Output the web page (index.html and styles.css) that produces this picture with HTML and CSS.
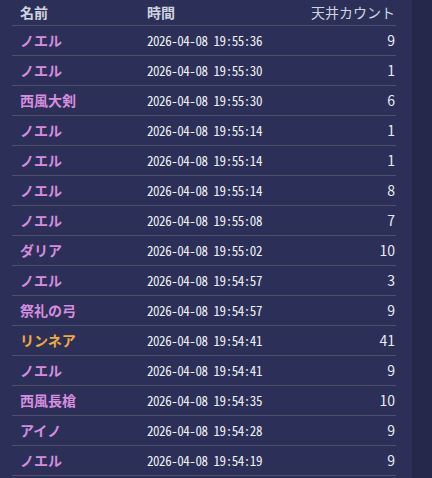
FILE: index.html
```html
<!DOCTYPE html>
<html lang="ja">
<head>
<meta charset="utf-8">
<link rel="stylesheet" href="styles.css">
</head>
<body>
<div class="page">
  <div class="panel">
    <table class="log">
      <thead>
        <tr><th class="c-name">名前</th><th class="c-time">時間</th><th class="c-count">天井カウント</th></tr>
      </thead>
      <tbody>
        <tr><td class="c-name">ノエル</td><td class="c-time">2026-04-08 19:55:36</td><td class="c-count">9</td></tr>
        <tr><td class="c-name">ノエル</td><td class="c-time">2026-04-08 19:55:30</td><td class="c-count">1</td></tr>
        <tr><td class="c-name">西風大剣</td><td class="c-time">2026-04-08 19:55:30</td><td class="c-count">6</td></tr>
        <tr><td class="c-name">ノエル</td><td class="c-time">2026-04-08 19:55:14</td><td class="c-count">1</td></tr>
        <tr><td class="c-name">ノエル</td><td class="c-time">2026-04-08 19:55:14</td><td class="c-count">1</td></tr>
        <tr><td class="c-name">ノエル</td><td class="c-time">2026-04-08 19:55:14</td><td class="c-count">8</td></tr>
        <tr><td class="c-name">ノエル</td><td class="c-time">2026-04-08 19:55:08</td><td class="c-count">7</td></tr>
        <tr><td class="c-name">ダリア</td><td class="c-time">2026-04-08 19:55:02</td><td class="c-count">10</td></tr>
        <tr><td class="c-name">ノエル</td><td class="c-time">2026-04-08 19:54:57</td><td class="c-count">3</td></tr>
        <tr><td class="c-name">祭礼の弓</td><td class="c-time">2026-04-08 19:54:57</td><td class="c-count">9</td></tr>
        <tr><td class="c-name gold">リンネア</td><td class="c-time">2026-04-08 19:54:41</td><td class="c-count">41</td></tr>
        <tr><td class="c-name">ノエル</td><td class="c-time">2026-04-08 19:54:41</td><td class="c-count">9</td></tr>
        <tr><td class="c-name">西風長槍</td><td class="c-time">2026-04-08 19:54:35</td><td class="c-count">10</td></tr>
        <tr><td class="c-name">アイノ</td><td class="c-time">2026-04-08 19:54:28</td><td class="c-count">9</td></tr>
        <tr><td class="c-name">ノエル</td><td class="c-time">2026-04-08 19:54:19</td><td class="c-count">9</td></tr>
      </tbody>
    </table>
  </div>
  <div class="strip"></div>
</div>
</body>
</html>
```
FILE: styles.css
```css
html, body {
  margin: 0;
  padding: 0;
  height: 100%;
  background: #25284a;
  overflow: hidden;
}
.page {
  display: flex;
  height: 100%;
}
.panel {
  width: 412px;
  background: #2c3058;
  padding: 0 16px 0 12px;
  box-sizing: border-box;
}
.strip {
  flex: 1;
  background: #25284a;
}
.log {
  width: 384px;
  border-collapse: collapse;
  table-layout: fixed;
  font-family: "Noto Sans CJK JP", "Noto Sans", sans-serif;
  color: #e8eaf2;
}
.log th {
  height: 25px;
  padding: 0 8px;
  font-size: 14px;
  font-weight: 700;
  color: #cfd3e0;
  text-align: left;
  border-bottom: 1px solid #4c5068;
  line-height: 25px;
  white-space: nowrap;
}
.log td {
  height: 29px;
  padding: 0 8px;
  border-bottom: 1px solid #4c5068;
  line-height: 29px;
  white-space: nowrap;
}
.log .c-name {
  width: 111px;
  font-size: 14px;
  font-weight: 700;
  color: #d58ede;
}
.log th.c-name { color: #cfd3e0; }
.log .c-time {
  width: 130px;
  font-family: "Noto Sans Mono CJK JP", "DejaVu Sans Mono", monospace;
  font-size: 13px;
  letter-spacing: -0.45px;
  font-weight: 500;
  color: #eef0f6;
}
.log th.c-time {
  font-family: "Noto Sans CJK JP", sans-serif;
  font-size: 14px;
  font-weight: 700;
  letter-spacing: 0;
  color: #cfd3e0;
}
.log .c-count {
  text-align: right;
  padding-right: 1px;
  font-size: 14px;
}
.log th.c-count {
  text-align: right;
  font-weight: 400;
}
.log .gold { color: #f2a93b; }
```
